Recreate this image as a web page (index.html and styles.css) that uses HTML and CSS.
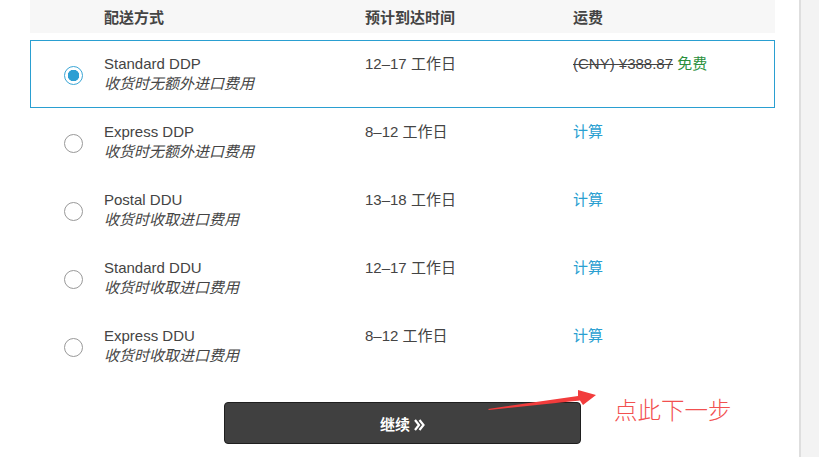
FILE: index.html
```html
<!DOCTYPE html>
<html lang="zh-CN">
<head>
    <meta charset="UTF-8">
    <title>配送方式</title>
    <link rel="stylesheet" href="styles.css">
</head>
<body>
    <div class="page">
        <div class="shipping">
            <div class="ship-head">
                <div></div>
                <div>配送方式</div>
                <div>预计到达时间</div>
                <div>运费</div>
            </div>

            <div class="ship-row selected">
                <div class="radio-cell"><span class="radio on"></span></div>
                <div>
                    <div class="name">Standard DDP</div>
                    <div class="note">收货时无额外进口费用</div>
                </div>
                <div class="days">12–17 工作日</div>
                <div><span class="old-price">(CNY) ¥388.87</span> <span class="free">免费</span></div>
            </div>

            <div class="ship-row">
                <div class="radio-cell"><span class="radio"></span></div>
                <div>
                    <div class="name">Express DDP</div>
                    <div class="note">收货时无额外进口费用</div>
                </div>
                <div class="days">8–12 工作日</div>
                <div><a class="calc">计算</a></div>
            </div>

            <div class="ship-row">
                <div class="radio-cell"><span class="radio"></span></div>
                <div>
                    <div class="name">Postal DDU</div>
                    <div class="note">收货时收取进口费用</div>
                </div>
                <div class="days">13–18 工作日</div>
                <div><a class="calc">计算</a></div>
            </div>

            <div class="ship-row">
                <div class="radio-cell"><span class="radio"></span></div>
                <div>
                    <div class="name">Standard DDU</div>
                    <div class="note">收货时收取进口费用</div>
                </div>
                <div class="days">12–17 工作日</div>
                <div><a class="calc">计算</a></div>
            </div>

            <div class="ship-row">
                <div class="radio-cell"><span class="radio"></span></div>
                <div>
                    <div class="name">Express DDU</div>
                    <div class="note">收货时收取进口费用</div>
                </div>
                <div class="days">8–12 工作日</div>
                <div><a class="calc">计算</a></div>
            </div>

            <div class="actions">
                <button class="continue">继续
                    <svg class="chev" width="11" height="12" viewBox="0 0 11 12">
                        <path d="M1 1 L5 6 L1 11 M5.5 1 L9.5 6 L5.5 11" fill="none" stroke="#fff" stroke-width="2.2"/>
                    </svg>
                </button>
            </div>
        </div>

        <!-- red annotation drawn over the page -->
        <svg class="note-arrow" width="120" height="30" viewBox="0 0 120 30">
            <polygon points="0,21 90,8 90,2 108,7 95,17 92,12.5 1,22" fill="#f23c3c"/>
        </svg>
        <div class="note-text">点此下一步</div>
    </div>
    <div class="sidebar"></div>
</body>
</html>
```

FILE: styles.css
```css
body {
    margin: 0;
    display: flex;
    height: 457px;
    overflow: hidden;
    font-family: "Liberation Sans", Arial, "Noto Sans CJK SC", sans-serif;
    font-size: 15px;
    color: #333;
    background: #fff;
}

.page {
    position: relative;
    width: 799px;
}

.sidebar {
    flex: 1;
    background: #f3f3f3;
    border-left: 2px solid #dedede;
}

.shipping {
    margin-left: 30px;
    width: 745px;
}

.ship-head,
.ship-row {
    display: grid;
    grid-template-columns: 73px 261px 208px 1fr;
}

/* the header has no border, so its first column is one pixel wider */
.ship-head {
    grid-template-columns: 74px 261px 208px 1fr;
    height: 33px;
    align-items: center;
    background: #f7f7f7;
    font-weight: bold;
    color: #444;
    margin-bottom: 7px;
}

.ship-row {
    box-sizing: border-box;
    height: 68px;
    padding-top: 13px;
    line-height: 20px;
    border: 1px solid transparent;
}

.ship-row.selected {
    border-color: #2a9fd1;
}

.radio-cell {
    padding-left: 33px;
    padding-top: 12px;
}

.radio {
    display: block;
    box-sizing: border-box;
    width: 19px;
    height: 19px;
    border: 1px solid #999;
    border-radius: 50%;
    background: #fff;
}

.radio.on {
    border-color: #3aa6d6;
    background: radial-gradient(circle, #2e9fd3 0 5.5px, #fff 6px);
}

.name {
    color: #444;
}

.note {
    font-style: italic;
    color: #444;
}

.days {
    color: #444;
}

.old-price {
    text-decoration: line-through;
    color: #444;
}

.free {
    color: #2a8f3c;
}

.calc {
    color: #2a9fd1;
    cursor: pointer;
}

.actions {
    display: flex;
    justify-content: center;
    padding-top: 22px;
}

.continue {
    width: 357px;
    height: 42px;
    background: #404040;
    border: 1px solid #1f1f1f;
    border-radius: 4px;
    color: #fff;
    font-family: "Liberation Sans", Arial, "Noto Sans CJK SC", sans-serif;
    font-size: 15px;
    font-weight: bold;
}

.chev {
    vertical-align: -1px;
}

.note-arrow {
    position: absolute;
    left: 488px;
    top: 388px;
}

.note-text {
    position: absolute;
    left: 614px;
    top: 392px;
    font-family: "Noto Sans CJK SC", sans-serif;
    font-weight: 300;
    font-size: 23.5px;
    color: #f25050;
}
```
